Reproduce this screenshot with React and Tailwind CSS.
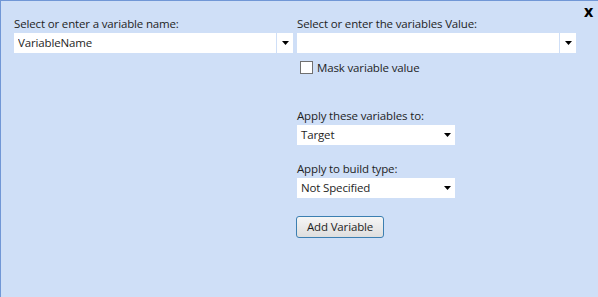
export default function App() {
  const Arrow = () => (
    <svg width="7" height="4" viewBox="0 0 7 4" className="block">
      <path d="M0 0h7L3.5 4z" fill="#000" />
    </svg>
  );

  return (
    <div
      className="relative w-[598px] h-[297px] bg-[#cfdff7] border-t border-l border-[#7197d6] text-[11.5px] tracking-[-0.15px] text-[#1e1e1e] overflow-hidden"
      style={{ fontFamily: '"Open Sans", "Noto Sans", sans-serif' }}
    >
      <button className="absolute right-[5px] top-[2px] text-[16px] font-bold leading-none text-black">x</button>

      <div className="flex gap-[4px] pl-[13px] pt-[14px]">
        {/* left column */}
        <div className="w-[279px] flex flex-col">
          <label className="leading-[17px] h-[18px]">Select or enter a variable name:</label>
          <div className="flex h-[20px] bg-white">
            <input
              defaultValue="VariableName"
              className="flex-1 min-w-0 px-[4px] outline-none bg-transparent"
            />
            <div className="w-[17px] border-l border-[#cfdff7] flex items-center justify-center">
              <Arrow />
            </div>
          </div>
        </div>

        {/* right column */}
        <div className="w-[279px] flex flex-col">
          <label className="leading-[17px] h-[18px]">Select or enter the variables Value:</label>
          <div className="flex h-[20px] bg-white">
            <input className="flex-1 min-w-0 px-[4px] outline-none bg-transparent" />
            <div className="w-[17px] border-l border-[#cfdff7] flex items-center justify-center">
              <Arrow />
            </div>
          </div>

          <label className="flex items-center gap-[4px] mt-[7px] ml-[3px] h-[15px]">
            <span className="w-[13px] h-[13px] bg-white border border-[#707070]" />
            <span>Mask variable value</span>
          </label>

          <div className="mt-[32px] leading-[17px] h-[17px]">Apply these variables to:</div>
          <div className="w-[158px] h-[20px] bg-white flex items-center justify-between px-[4px] mt-[1px]">
            <span>Target</span>
            <Arrow />
          </div>

          <div className="mt-[15px] leading-[17px] h-[17px]">Apply to build type:</div>
          <div className="w-[158px] h-[20px] bg-white flex items-center justify-between px-[4px] mt-[1px]">
            <span>Not Specified</span>
            <Arrow />
          </div>

          <button className="mt-[18px] w-[88px] h-[22px] rounded-[3px] border border-[#3c7fb1] bg-gradient-to-b from-[#f6f6f6] to-[#dedede] leading-none -ml-[1px]">
            Add Variable
          </button>
        </div>
      </div>
    </div>
  );
}
